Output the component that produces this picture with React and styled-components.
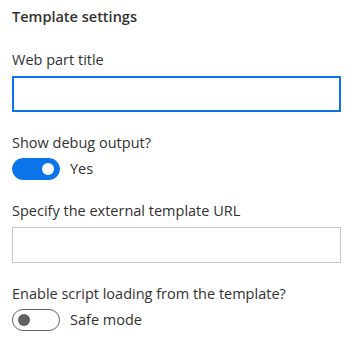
import React from "react";
import styled, { createGlobalStyle } from "styled-components";

const Global = createGlobalStyle`
  html, body { margin: 0; padding: 0; background: #ffffff; }
  body { font-family: "Segoe UI", "Open Sans", "Noto Sans", sans-serif; color: #323130; }
`;

const Pane = styled.div`
  width: 354px;
  padding: 0 13px 0 12px;
  box-sizing: border-box;
`;

const Heading = styled.h2`
  margin: 0;
  padding: 7px 0 18px;
  font-size: 14.5px;
  line-height: 20px;
  font-weight: 600;
  color: #323130;
`;

const Field = styled.div`
  display: flex;
  flex-direction: column;
  margin-bottom: ${(p) => p.$gap || 16}px;
`;

const Label = styled.label`
  display: block;
  padding: 5px 0;
  font-size: 14.5px;
  line-height: 20px;
  color: #323130;
`;

const Input = styled.div`
  height: 36px;
  box-sizing: border-box;
  margin-top: 1px;
  border: ${(p) => (p.$focused ? "2px solid #0a74e8" : "1px solid #c8c8c8")};
  background: #fff;
`;

const ToggleRow = styled.div`
  display: flex;
  align-items: center;
  gap: 10px;
  margin-top: 0;
`;

const Track = styled.span`
  position: relative;
  width: 48px;
  height: 22px;
  box-sizing: border-box;
  border-radius: 11px;
  border: 1px solid ${(p) => (p.$on ? "#0a74e8" : "#616161")};
  background: ${(p) => (p.$on ? "#0a74e8" : "#fff")};
  display: flex;
  align-items: center;
  justify-content: ${(p) => (p.$on ? "flex-end" : "flex-start")};
  padding: 0 5px;
`;

const Knob = styled.span`
  width: 12px;
  height: 12px;
  border-radius: 50%;
  background: ${(p) => (p.$on ? "#fff" : "#616161")};
`;

const ToggleText = styled.span`
  font-size: 14.5px;
  line-height: 20px;
  color: #323130;
`;

function Toggle({ on, text }) {
  return (
    <ToggleRow>
      <Track $on={on}>
        <Knob $on={on} />
      </Track>
      <ToggleText>{text}</ToggleText>
    </ToggleRow>
  );
}

export default function App() {
  return (
    <>
      <Global />
      <Pane>
        <Heading>Template settings</Heading>
        <Field>
          <Label>Web part title</Label>
          <Input $focused />
        </Field>
        <Field>
          <Label>Show debug output?</Label>
          <Toggle on text="Yes" />
        </Field>
        <Field>
          <Label>Specify the external template URL</Label>
          <Input />
        </Field>
        <Field>
          <Label>Enable script loading from the template?</Label>
          <Toggle text="Safe mode" />
        </Field>
      </Pane>
    </>
  );
}
